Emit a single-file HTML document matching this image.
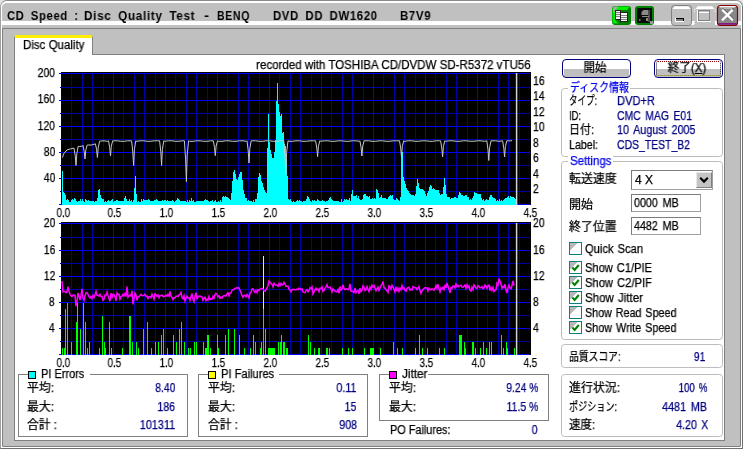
<!DOCTYPE html>
<html lang="ja"><head><meta charset="utf-8"><title>CD Speed : Disc Quality Test</title>
<style>
html,body{margin:0;padding:0}
body{width:743px;height:449px;overflow:hidden;position:relative;background:#e4e4e4;font-family:"Liberation Sans","Noto Sans CJK JP",sans-serif;font-size:12px;line-height:14px}
.abs{position:absolute}
.t{position:absolute;white-space:pre;line-height:14px;height:14px;will-change:transform;-webkit-text-stroke:0.25px}
.gb{position:absolute;border:1px solid #bcbcbc;border-radius:3.5px;box-sizing:border-box}
.gbs{position:absolute;border:1px solid #808080;box-sizing:border-box}
.wh{position:absolute;background:#fff}
.btn{position:absolute;box-sizing:border-box;border:1px solid #00007a;border-radius:4px;background:linear-gradient(#c0c0c0,#c0c0c0) no-repeat 1px 9px/65px 8px,#fff}
.inp{position:absolute;box-sizing:border-box;border:1px solid #7b7b7b;border-right-color:#a0a0a0;border-bottom-color:#a0a0a0;background:#fff}
.cb{position:absolute;box-sizing:border-box;width:13px;height:13px;border:1px solid #0a8080;background:linear-gradient(135deg,#b8b8b8 0,#b8b8b8 32%,#fff 32%,#fff 100%)}
.sq{position:absolute;box-sizing:border-box;width:8px;height:8px;border:1px solid #000}
</style></head>
<body>
<div class="abs" style="left:0;top:0;width:743px;height:449px;box-sizing:border-box;background:#c0c0c0;border:1px solid #8a8a8a;border-right-color:#707070;border-bottom-color:#707070;border-left-color:#a0a0a0;border-radius:7px 7px 0 0"></div>
<div class="abs" style="left:1px;top:1px;width:741px;height:447px;box-sizing:border-box;border:1px solid #fff;border-top-width:2px;border-radius:6px 6px 0 0"></div>
<div class="wh" style="left:2px;top:21px;width:739px;height:4px"></div>
<div class="abs" style="left:2px;top:28px;width:739px;height:419px;box-sizing:border-box;border:1px solid #808080;border-radius:0 0 2px 2px"></div>
<div class="wh" style="left:14px;top:54px;width:711px;height:387px;border:1px solid #808080;box-sizing:border-box"></div>
<div class="wh" style="left:14px;top:35px;width:79px;height:20px;border-top:3px solid #ffee00;border-right:1px solid #808080;border-left:1px solid #808080;box-sizing:border-box;border-radius:2px 2px 0 0"></div>
<svg class="abs" style="left:600px;top:0" width="143" height="30" viewBox="0 0 143 30"><rect x="12" y="6" width="19" height="19" rx="3" fill="#008000"/><path d="M14,6.5h16l-3,3.5h-8l-4,5v5l3.5,3.5h-5l-1,-1.5v-14z" fill="#00f000"/><path d="M13,7.5l1.5,-1h4l-5.5,7z" fill="#a8a8a8"/><rect x="15.5" y="10.5" width="5" height="9" fill="#f4f4f4" stroke="#202020" stroke-width="1"/><path d="M16,12.5h4M16,14.5h4M16,16.5h4" stroke="#808080" stroke-width="1" shape-rendering="crispEdges"/><rect x="20.5" y="12.5" width="7" height="9" fill="#fafafa" stroke="#202020" stroke-width="1"/><path d="M21,15.5h6M21,17.5h6M21,19.5h6" stroke="#808080" stroke-width="1" shape-rendering="crispEdges"/><rect x="35" y="6" width="19" height="19" rx="3" fill="#008000"/><rect x="37" y="8" width="15" height="15" fill="#0a0a0a"/><path d="M41.5,15v-3l2,-2h4.5v5z" fill="#8a8a8a"/><path d="M49,10v12" stroke="#8a8a8a" stroke-width="1"/><path d="M42,16.5h7" stroke="#8a8a8a" stroke-width="1"/><rect x="46" y="18" width="2" height="3" fill="#8a8a8a"/><rect x="39" y="19" width="1.5" height="2" fill="#707070"/><rect x="50" y="21" width="3" height="3" fill="#9a9a9a"/><rect x="71.5" y="5.5" width="20" height="20" rx="3" fill="#c0c0c0" stroke="#808080" stroke-width="1"/><path d="M72.6,9L74.6,6.2H88.4L90.4,9z" fill="#fff"/><rect x="76" y="18" width="8" height="3" fill="#808080"/><path d="M76,18.5H84M83.5,18V21" stroke="#000" stroke-width="1" fill="none"/><path d="M75.5,18V22M75,21.5H84" stroke="#fff" stroke-width="1" fill="none"/><rect x="94" y="9" width="21" height="16" fill="#c0c0c0"/><path d="M95.4,9L97.6,6.2H112.2L114.4,9z" fill="#fff"/><path d="M94.5,9v3M115.2,9v3M94.5,21v4M115.2,21v4" stroke="#fff" stroke-width="1" stroke-dasharray="1 1" fill="none"/><path d="M97.5,10V22M97,21.5H111" stroke="#fff" stroke-width="1" fill="none"/><rect x="98.5" y="10.5" width="11" height="10" fill="none" stroke="#808080" stroke-width="1"/><path d="M99,12.5H109" stroke="#fff" stroke-width="1" fill="none"/><rect x="117.5" y="5.5" width="20" height="20" rx="3" fill="#878787" stroke="#8c0000" stroke-width="1.2"/><path d="M119,6.6H136L133,9H122z" fill="#b4b4b4"/><path d="M119.5,6.6H135.5" stroke="#fff" stroke-width="1"/><path d="M118.6,23.9h17.8" stroke="#800080" stroke-width="1.4"/><path d="M122.6,8.6l11,11M133.4,8.6l-11,11" stroke="#000" stroke-width="1.2"/><path d="M122.2,9.6l10.8,10.8M132.8,9.6l-10.8,10.8" stroke="#fff" stroke-width="2.3"/></svg>
<div class="btn" style="left:562px;top:59px;width:69px;height:19px"></div>
<div class="btn" style="left:654px;top:59px;width:69px;height:19px"><div style="position:absolute;left:1px;top:1px;right:1px;bottom:1px;border:1px dotted #202020;border-top-color:#900000;border-bottom-color:#808000;border-radius:2px"></div></div>
<div class="gb" style="left:561px;top:88px;width:162px;height:69px"></div>
<div class="wh" style="left:568px;top:83px;width:62px;height:10px"></div>
<div class="gb" style="left:561px;top:161px;width:162px;height:179px"></div>
<div class="wh" style="left:568px;top:155px;width:45px;height:12px"></div>
<div class="gb" style="left:561px;top:344px;width:162px;height:24px"></div>
<div class="gb" style="left:561px;top:374px;width:162px;height:63px"></div>
<div class="inp" style="left:631px;top:170px;width:82px;height:20px"></div>
<div class="abs" style="left:696px;top:172px;width:16px;height:16px;background:#c4c4c4;box-sizing:border-box;border:1px solid #e8e8e8;border-right-color:#808080;border-bottom-color:#808080"><svg width="14" height="14" viewBox="0 0 14 14" style="position:absolute;left:0;top:0"><path d="M3.2,4.8L7,8.6L10.8,4.8" stroke="#000" stroke-width="2.2" fill="none"/></svg></div>
<div class="inp" style="left:631px;top:194px;width:70px;height:18px"></div>
<div class="inp" style="left:631px;top:217px;width:70px;height:18px"></div>
<div class="cb" style="left:569px;top:242px"></div>
<div class="cb" style="left:569px;top:261px"><svg width="11" height="11" viewBox="0 0 11 11" style="position:absolute;left:0;top:0"><path d="M2.3,5.4L4.6,7.9L8.8,3" stroke="#008000" stroke-width="2.1" fill="none"/></svg></div>
<div class="cb" style="left:569px;top:276px"><svg width="11" height="11" viewBox="0 0 11 11" style="position:absolute;left:0;top:0"><path d="M2.3,5.4L4.6,7.9L8.8,3" stroke="#008000" stroke-width="2.1" fill="none"/></svg></div>
<div class="cb" style="left:569px;top:291px"><svg width="11" height="11" viewBox="0 0 11 11" style="position:absolute;left:0;top:0"><path d="M2.3,5.4L4.6,7.9L8.8,3" stroke="#008000" stroke-width="2.1" fill="none"/></svg></div>
<div class="cb" style="left:569px;top:306px"></div>
<div class="cb" style="left:569px;top:321px"><svg width="11" height="11" viewBox="0 0 11 11" style="position:absolute;left:0;top:0"><path d="M2.3,5.4L4.6,7.9L8.8,3" stroke="#008000" stroke-width="2.1" fill="none"/></svg></div>
<div class="gbs" style="left:18px;top:374px;width:170px;height:63px"></div>
<div class="wh" style="left:28px;top:370px;width:62px;height:10px"></div>
<div class="gbs" style="left:198px;top:374px;width:170px;height:63px"></div>
<div class="wh" style="left:208px;top:370px;width:71px;height:10px"></div>
<div class="gbs" style="left:379px;top:374px;width:170px;height:47px"></div>
<div class="wh" style="left:389px;top:370px;width:39px;height:10px"></div>
<div class="sq" style="left:28px;top:371px;background:#00ffff"></div>
<div class="sq" style="left:208px;top:371px;background:#ffff00"></div>
<div class="sq" style="left:389px;top:371px;background:#ff00ff"></div>
<svg class="abs" style="left:0;top:0" width="743" height="449" viewBox="0 0 743 449" shape-rendering="crispEdges">
<rect x="61" y="72" width="470" height="133" fill="#000"/>
<path d="M71.5,73V204M82.5,73V204M92.5,73V204M103.5,73V204M123.5,73V204M134.5,73V204M144.5,73V204M155.5,73V204M175.5,73V204M186.5,73V204M196.5,73V204M207.5,73V204M227.5,73V204M238.5,73V204M248.5,73V204M259.5,73V204M279.5,73V204M290.5,73V204M300.5,73V204M311.5,73V204M331.5,73V204M342.5,73V204M352.5,73V204M363.5,73V204M383.5,73V204M394.5,73V204M404.5,73V204M415.5,73V204M435.5,73V204M446.5,73V204M456.5,73V204M467.5,73V204M487.5,73V204M498.5,73V204M508.5,73V204M519.5,73V204M60,87.5H530M60,113.5H530M60,139.5H530M60,165.5H530M60,191.5H530" stroke="#0000a8" stroke-width="1" fill="none"/>
<path d="M113.5,73V204M165.5,73V204M217.5,73V204M269.5,73V204M321.5,73V204M373.5,73V204M425.5,73V204M477.5,73V204M59,73.5H530M59,100.5H530M59,126.5H530M59,152.5H530M59,178.5H530M59,204.5H530" stroke="#0000ff" stroke-width="1" fill="none"/>
<rect x="61" y="222" width="470" height="133" fill="#000"/>
<path d="M71.5,223V354M82.5,223V354M92.5,223V354M103.5,223V354M123.5,223V354M134.5,223V354M144.5,223V354M155.5,223V354M175.5,223V354M186.5,223V354M196.5,223V354M207.5,223V354M227.5,223V354M238.5,223V354M248.5,223V354M259.5,223V354M279.5,223V354M290.5,223V354M300.5,223V354M311.5,223V354M331.5,223V354M342.5,223V354M352.5,223V354M363.5,223V354M383.5,223V354M394.5,223V354M404.5,223V354M415.5,223V354M435.5,223V354M446.5,223V354M456.5,223V354M467.5,223V354M487.5,223V354M498.5,223V354M508.5,223V354M519.5,223V354M60,237.5H530M60,263.5H530M60,289.5H530M60,315.5H530M60,341.5H530" stroke="#0000a8" stroke-width="1" fill="none"/>
<path d="M113.5,223V354M165.5,223V354M217.5,223V354M269.5,223V354M321.5,223V354M373.5,223V354M425.5,223V354M477.5,223V354M59,223.5H530M59,250.5H530M59,276.5H530M59,302.5H530M59,328.5H530M59,354.5H530" stroke="#0000ff" stroke-width="1" fill="none"/>
<path d="M62,204.5V171h1V192h1V193h1V195h1V200h1V199h1V200h1V202h1V202h1V200h1V199h1V200h1V198h1V199h1V201h1V202h1V201h1V201h1V199h1V201h1V199h1V201h1V202h1V199h1V200h1V201h1V200h1V201h1V201h1V201h1V201h1V201h1V202h1V201h1V201h1V198h1V190h1V189h1V195h1V198h1V199h1V199h1V202h1V201h1V202h1V201h1V200h1V201h1V201h1V200h1V199h1V202h1V201h1V201h1V200h1V200h1V201h1V201h1V201h1V201h1V201h1V201h1V198h1V196h1V199h1V201h1V201h1V199h1V201h1V200h1V202h1V200h1V188h1V176h1V194h1V202h1V201h1V202h1V202h1V199h1V201h1V199h1V200h1V200h1V200h1V200h1V199h1V200h1V201h1V201h1V201h1V201h1V200h1V200h1V199h1V200h1V201h1V201h1V201h1V201h1V200h1V201h1V200h1V200h1V201h1V200h1V201h1V201h1V201h1V201h1V200h1V201h1V202h1V201h1V200h1V198h1V199h1V200h1V201h1V201h1V201h1V201h1V201h1V201h1V202h1V200h1V202h1V200h1V201h1V198h1V201h1V200h1V202h1V202h1V201h1V201h1V201h1V201h1V201h1V201h1V201h1V201h1V200h1V199h1V200h1V200h1V201h1V202h1V201h1V201h1V200h1V202h1V201h1V200h1V202h1V202h1V201h1V202h1V200h1V202h1V197h1V196h1V197h1V196h1V197h1V197h1V198h1V199h1V200h1V193h1V181h1V172h1V170h1V174h1V179h1V180h1V177h1V174h1V172h1V172h1V180h1V190h1V194h1V198h1V198h1V201h1V200h1V201h1V201h1V201h1V202h1V200h1V202h1V199h1V199h1V193h1V177h1V173h1V175h1V181h1V183h1V187h1V190h1V192h1V193h1V148h1V114h1V142h1V150h1V154h1V158h1V158h1V152h1V140h1V101h1V83h1V104h1V112h1V116h1V114h1V133h1V132h1V144h1V146h1V159h1V176h1V199h1V200h1V199h1V201h1V202h1V201h1V202h1V202h1V201h1V200h1V201h1V200h1V201h1V201h1V202h1V201h1V201h1V201h1V199h1V196h1V197h1V199h1V201h1V202h1V200h1V201h1V200h1V201h1V201h1V199h1V200h1V201h1V201h1V201h1V200h1V201h1V201h1V202h1V201h1V201h1V200h1V198h1V197h1V199h1V200h1V201h1V201h1V201h1V201h1V201h1V201h1V202h1V202h1V199h1V202h1V201h1V199h1V200h1V199h1V200h1V200h1V198h1V201h1V194h1V190h1V196h1V196h1V196h1V195h1V198h1V196h1V199h1V200h1V200h1V199h1V195h1V194h1V194h1V196h1V196h1V197h1V196h1V199h1V199h1V198h1V199h1V198h1V199h1V189h1V190h1V193h1V198h1V197h1V195h1V198h1V198h1V198h1V198h1V199h1V199h1V197h1V196h1V195h1V196h1V195h1V199h1V200h1V200h1V198h1V199h1V200h1V201h1V197h1V152h1V152h1V177h1V181h1V184h1V188h1V190h1V191h1V193h1V194h1V195h1V195h1V195h1V196h1V194h1V186h1V179h1V183h1V188h1V189h1V189h1V189h1V190h1V191h1V194h1V196h1V193h1V191h1V187h1V185h1V186h1V189h1V188h1V189h1V190h1V190h1V190h1V190h1V193h1V195h1V194h1V194h1V187h1V178h1V185h1V194h1V197h1V197h1V197h1V199h1V198h1V198h1V198h1V197h1V197h1V198h1V198h1V195h1V192h1V193h1V195h1V195h1V196h1V196h1V195h1V195h1V197h1V197h1V200h1V199h1V200h1V198h1V196h1V192h1V193h1V193h1V194h1V194h1V194h1V194h1V198h1V200h1V199h1V201h1V200h1V199h1V200h1V200h1V197h1V195h1V195h1V197h1V198h1V198h1V199h1V201h1V200h1V201h1V199h1V201h1V200h1V201h1V200h1V199h1V198h1V198h1V197h1V196h1V198h1V196h1V197h1V197h1V197h1V198h1V199h1V203h1V204.5Z" fill="#00ffff" stroke="none"/>
<path d="M62.5,157.6L63.5,154.0L67.0,149.9L70.5,148.9L74.0,148.1L75.2,155.5L76.0,165.5L76.8,153.6L78.2,146.3L79.2,146.5L82.7,146.0L83.0,145.5L84.2,151.5L85.0,159.0L85.8,150.1L87.2,145.1L88.2,145.0L91.7,145.0L95.4,143.8L96.6,149.3L97.4,157.5L98.2,147.8L99.6,141.2L100.6,141.0L104.1,140.9L107.6,141.3L108.5,140.8L109.7,147.6L110.5,156.0L111.3,146.1L112.7,140.8L113.7,140.8L117.2,140.8L120.7,141.3L124.2,141.3L127.7,140.8L131.2,140.8L131.6,140.8L132.8,151.9L133.6,165.5L134.4,149.4L135.8,140.8L136.8,141.3L140.3,140.8L143.8,140.8L147.3,141.3L150.8,141.3L154.3,140.8L157.8,140.8L159.6,140.8L160.8,151.9L161.6,165.5L162.4,149.4L163.8,140.8L164.8,141.3L168.3,140.8L171.8,140.8L175.3,141.3L178.8,141.3L182.3,140.8L184.4,140.8L185.6,159.2L186.4,181.7L187.2,155.1L188.6,140.8L189.6,141.3L193.1,141.3L196.6,140.8L200.1,140.8L203.6,141.3L207.1,141.3L210.6,140.8L213.3,140.8L214.5,147.5L215.3,155.7L216.1,146.0L217.5,140.8L218.5,141.3L222.0,141.3L225.5,140.8L229.0,140.8L232.5,141.3L236.0,141.3L239.5,140.8L243.0,140.8L246.5,141.3L247.0,140.8L248.2,150.8L249.0,163.0L249.8,148.6L251.2,140.8L252.2,140.8L255.7,140.8L259.2,141.3L262.7,141.3L266.2,140.8L269.7,140.8L273.2,141.3L276.7,141.3L280.2,140.8L283.8,140.8L285.0,156.0L285.8,174.5L286.6,152.6L288.0,140.8L289.0,141.3L292.5,141.3L296.0,140.8L299.5,140.8L303.0,141.3L306.5,141.3L310.0,140.8L313.5,140.8L315.6,140.8L316.8,148.0L317.6,156.7L318.4,146.4L319.8,140.8L320.8,141.3L324.3,140.8L327.8,140.8L331.3,141.3L334.8,141.3L338.3,140.8L341.8,140.8L345.3,141.3L348.8,141.3L352.3,140.8L355.8,140.8L359.3,141.3L359.9,140.8L361.1,147.6L361.9,156.0L362.7,146.1L364.1,140.8L365.1,140.8L368.6,140.8L372.1,141.3L375.6,141.3L379.1,140.8L382.6,140.8L386.1,141.3L389.6,141.3L393.1,140.8L396.6,140.8L399.5,140.8L400.7,148.1L401.5,157.0L402.3,146.5L403.7,140.8L404.7,141.3L408.2,140.8L411.7,140.8L415.2,141.3L418.7,141.3L422.2,140.8L425.7,140.8L429.2,141.3L432.7,141.3L436.2,140.8L439.7,140.8L440.6,140.8L441.8,148.1L442.6,157.0L443.4,146.5L444.8,140.8L445.8,141.3L449.3,140.8L452.8,140.8L456.3,141.3L459.8,141.3L463.3,140.8L466.8,140.8L470.3,141.3L473.8,141.3L477.3,140.8L480.8,140.8L484.3,141.3L486.8,140.8L488.0,149.7L488.8,160.5L489.6,147.7L491.0,140.8L492.0,140.8L495.5,140.8L499.0,141.3L502.6,140.8L503.8,148.1L504.6,157.0L505.4,146.5L506.8,140.8L507.8,140.8L510.8,140.8L512.0,140.6" fill="none" stroke="#c8c8c8" stroke-width="1" shape-rendering="auto"/>
<path d="M62.5,354.5V348.0M64.5,354.5V348.0M65.5,354.5V309.0M67.5,354.5V302.5M71.5,354.5V341.5M76.5,354.5V322.0M77.5,354.5V302.5M80.5,354.5V328.5M83.5,354.5V302.5M85.5,354.5V322.0M87.5,354.5V348.0M89.5,354.5V341.5M99.5,354.5V348.0M102.5,354.5V315.5M104.5,354.5V341.5M105.5,354.5V348.0M109.5,354.5V322.0M111.5,354.5V348.0M122.5,354.5V348.0M129.5,354.5V315.5M130.5,354.5V315.5M132.5,354.5V341.5M136.5,354.5V341.5M138.5,354.5V348.0M143.5,354.5V328.5M147.5,354.5V322.0M151.5,354.5V348.0M155.5,354.5V341.5M158.5,354.5V341.5M161.5,354.5V335.0M163.5,354.5V328.5M167.5,354.5V348.0M173.5,354.5V335.0M176.5,354.5V341.5M179.5,354.5V328.5M181.5,354.5V322.0M184.5,354.5V341.5M188.5,354.5V348.0M190.5,354.5V348.0M194.5,354.5V341.5M196.5,354.5V341.5M203.5,354.5V341.5M205.5,354.5V348.0M207.5,354.5V335.0M210.5,354.5V348.0M206.5,354.5V348.0M208.5,354.5V335.0M217.5,354.5V335.0M218.5,354.5V348.0M225.5,354.5V335.0M228.5,354.5V328.5M234.5,354.5V328.5M239.5,354.5V335.0M244.5,354.5V348.0M250.5,354.5V348.0M253.5,354.5V335.0M255.5,354.5V341.5M260.5,354.5V348.0M261.5,354.5V341.5M265.5,354.5V328.5M268.5,354.5V348.0M269.5,354.5V348.0M270.5,354.5V348.0M271.5,354.5V348.0M272.5,354.5V348.0M273.5,354.5V348.0M274.5,354.5V348.0M278.5,354.5V341.5M280.5,354.5V341.5M281.5,354.5V341.5M281.5,354.5V335.0M283.5,354.5V341.5M284.5,354.5V341.5M286.5,354.5V348.0M287.5,354.5V348.0M308.5,354.5V335.0M310.5,354.5V341.5M314.5,354.5V348.0M318.5,354.5V348.0M319.5,354.5V348.0M326.5,354.5V348.0M327.5,354.5V348.0M329.5,354.5V348.0M342.5,354.5V348.0M348.5,354.5V348.0M352.5,354.5V348.0M364.5,354.5V348.0M370.5,354.5V348.0M371.5,354.5V348.0M372.5,354.5V348.0M373.5,354.5V348.0M380.5,354.5V348.0M393.5,354.5V341.5M397.5,354.5V348.0M402.5,354.5V348.0M415.5,354.5V348.0M419.5,354.5V335.0M422.5,354.5V348.0M427.5,354.5V348.0M439.5,354.5V348.0M444.5,354.5V348.0M459.5,354.5V335.0M460.5,354.5V335.0M461.5,354.5V335.0M464.5,354.5V341.5M465.5,354.5V348.0M472.5,354.5V341.5M473.5,354.5V341.5M475.5,354.5V348.0M480.5,354.5V348.0M483.5,354.5V341.5M486.5,354.5V348.0M489.5,354.5V341.5M491.5,354.5V341.5M501.5,354.5V335.0M503.5,354.5V348.0M506.5,354.5V341.5M507.5,354.5V348.0M514.5,354.5V348.0" stroke="#00ff00" stroke-width="1" fill="none"/>
<path d="M263.5,354.5V309.0" stroke="#00ff00" stroke-width="1"/>
<path d="M263.5,309.0V256.0" stroke="#ffff00" stroke-width="1"/>
<path d="M62.0,281.0L63.0,291.9L64.0,291.2L65.0,291.5L66.0,292.8L67.0,292.0L68.0,286.7L69.0,291.4L70.0,294.3L71.0,295.9L72.0,296.5L73.0,295.2L74.0,295.0L75.0,295.3L76.0,306.2L77.0,301.6L78.0,293.0L79.0,296.2L80.0,300.0L81.0,295.7L82.0,288.8L83.0,297.7L84.0,300.3L85.0,295.9L86.0,292.6L87.0,292.5L88.0,294.4L89.0,296.6L90.0,297.9L91.0,296.4L92.0,298.5L93.0,295.4L94.0,297.4L95.0,294.7L96.0,291.5L97.0,295.3L98.0,295.2L99.0,296.0L100.0,294.3L101.0,296.6L102.0,296.5L103.0,300.2L104.0,299.1L105.0,295.1L106.0,295.4L107.0,292.1L108.0,295.4L109.0,298.4L110.0,301.2L111.0,293.2L112.0,298.2L113.0,294.3L114.0,294.7L115.0,296.7L116.0,300.9L117.0,293.0L118.0,294.4L119.0,294.2L120.0,299.1L121.0,296.6L122.0,296.2L123.0,294.3L124.0,295.9L125.0,293.7L126.0,296.6L127.0,286.5L128.0,297.2L129.0,295.9L130.0,294.9L131.0,295.9L132.0,290.8L133.0,304.4L134.0,298.5L135.0,293.0L136.0,295.0L137.0,300.4L138.0,296.8L139.0,296.7L140.0,295.4L141.0,294.4L142.0,295.7L143.0,295.5L144.0,295.1L145.0,294.3L146.0,296.5L147.0,296.0L148.0,298.5L149.0,296.7L150.0,296.5L151.0,297.7L152.0,294.2L153.0,296.3L154.0,299.2L155.0,293.9L156.0,294.8L157.0,296.2L158.0,295.0L159.0,297.6L160.0,295.6L161.0,295.5L162.0,295.1L163.0,296.3L164.0,296.9L165.0,295.8L166.0,295.0L167.0,296.2L168.0,294.5L169.0,296.1L170.0,291.4L171.0,296.1L172.0,297.4L173.0,299.6L174.0,297.8L175.0,297.7L176.0,296.3L177.0,296.0L178.0,296.5L179.0,294.9L180.0,294.4L181.0,292.5L182.0,297.6L183.0,298.8L184.0,295.8L185.0,301.0L186.0,298.2L187.0,296.1L188.0,297.9L189.0,297.7L190.0,300.3L191.0,296.7L192.0,293.4L193.0,299.2L194.0,301.7L195.0,296.4L196.0,292.6L197.0,299.3L198.0,296.2L199.0,296.6L200.0,295.9L201.0,296.8L202.0,297.0L203.0,300.3L204.0,298.5L205.0,297.3L206.0,300.7L207.0,299.1L208.0,300.1L209.0,296.4L210.0,299.5L211.0,298.9L212.0,299.1L213.0,296.3L214.0,298.1L215.0,294.6L216.0,293.3L217.0,294.3L218.0,296.8L219.0,295.8L220.0,298.4L221.0,297.2L222.0,298.1L223.0,296.1L224.0,295.7L225.0,295.6L226.0,296.0L227.0,293.8L228.0,292.9L229.0,295.8L230.0,292.9L231.0,292.8L232.0,290.5L233.0,289.7L234.0,289.3L235.0,288.4L236.0,288.1L237.0,287.5L238.0,288.4L239.0,287.9L240.0,290.2L241.0,292.8L242.0,295.4L243.0,297.2L244.0,295.5L245.0,295.4L246.0,296.7L247.0,294.5L248.0,296.0L249.0,297.9L250.0,293.2L251.0,292.4L252.0,289.0L253.0,288.8L254.0,290.8L255.0,292.5L256.0,290.3L257.0,292.7L258.0,289.7L259.0,290.4L260.0,289.1L261.0,288.8L262.0,288.4L263.0,289.0L264.0,290.9L265.0,291.3L266.0,289.5L267.0,287.8L268.0,285.7L269.0,281.1L270.0,282.1L271.0,283.2L272.0,284.1L273.0,286.8L274.0,283.2L275.0,284.7L276.0,285.2L277.0,285.3L278.0,286.2L279.0,283.5L280.0,285.7L281.0,283.3L282.0,285.0L283.0,284.8L284.0,282.3L285.0,283.8L286.0,286.4L287.0,286.2L288.0,286.3L289.0,289.3L290.0,290.1L291.0,291.8L292.0,289.7L293.0,289.3L294.0,289.4L295.0,289.7L296.0,289.8L297.0,289.1L298.0,289.5L299.0,288.2L300.0,288.7L301.0,289.5L302.0,288.9L303.0,291.9L304.0,292.4L305.0,292.7L306.0,290.6L307.0,289.6L308.0,291.7L309.0,290.4L310.0,287.6L311.0,288.7L312.0,287.0L313.0,293.9L314.0,291.9L315.0,289.6L316.0,288.1L317.0,289.9L318.0,289.2L319.0,291.7L320.0,288.1L321.0,288.4L322.0,286.9L323.0,291.5L324.0,290.6L325.0,288.3L326.0,286.8L327.0,284.6L328.0,287.7L329.0,287.6L330.0,287.0L331.0,289.0L332.0,291.9L333.0,288.8L334.0,290.1L335.0,291.0L336.0,291.5L337.0,291.9L338.0,289.5L339.0,293.3L340.0,286.5L341.0,290.1L342.0,289.2L343.0,284.8L344.0,288.5L345.0,289.7L346.0,289.0L347.0,288.8L348.0,289.8L349.0,288.8L350.0,283.9L351.0,291.2L352.0,291.2L353.0,291.4L354.0,292.4L355.0,288.0L356.0,292.7L357.0,291.2L358.0,290.5L359.0,293.8L360.0,288.1L361.0,291.7L362.0,290.0L363.0,285.9L364.0,287.4L365.0,290.6L366.0,289.5L367.0,286.6L368.0,289.6L369.0,291.6L370.0,287.2L371.0,289.5L372.0,285.2L373.0,287.0L374.0,285.4L375.0,288.4L376.0,290.7L377.0,288.7L378.0,287.0L379.0,290.4L380.0,287.8L381.0,285.7L382.0,284.5L383.0,281.4L384.0,287.8L385.0,288.2L386.0,289.7L387.0,290.8L388.0,292.4L389.0,285.7L390.0,286.4L391.0,289.1L392.0,285.4L393.0,287.1L394.0,289.2L395.0,292.0L396.0,286.8L397.0,291.6L398.0,288.3L399.0,291.3L400.0,288.2L401.0,289.9L402.0,285.6L403.0,288.8L404.0,288.0L405.0,290.3L406.0,291.2L407.0,288.3L408.0,287.6L409.0,287.2L410.0,290.1L411.0,289.2L412.0,290.0L413.0,286.4L414.0,287.1L415.0,287.8L416.0,287.8L417.0,289.5L418.0,288.0L419.0,286.6L420.0,290.6L421.0,293.5L422.0,291.2L423.0,289.4L424.0,288.3L425.0,287.8L426.0,287.8L427.0,287.9L428.0,291.0L429.0,288.1L430.0,289.0L431.0,289.9L432.0,288.6L433.0,289.7L434.0,290.2L435.0,288.5L436.0,285.6L437.0,288.5L438.0,284.2L439.0,288.8L440.0,291.8L441.0,288.0L442.0,289.0L443.0,287.4L444.0,289.6L445.0,284.7L446.0,287.9L447.0,282.9L448.0,286.6L449.0,289.3L450.0,292.8L451.0,287.8L452.0,288.4L453.0,286.1L454.0,286.1L455.0,287.8L456.0,284.1L457.0,286.5L458.0,285.4L459.0,286.7L460.0,285.8L461.0,285.2L462.0,287.1L463.0,287.3L464.0,286.2L465.0,285.0L466.0,288.4L467.0,284.9L468.0,287.6L469.0,285.9L470.0,290.1L471.0,291.0L472.0,287.2L473.0,289.6L474.0,284.9L475.0,286.3L476.0,288.2L477.0,288.5L478.0,285.6L479.0,286.5L480.0,287.8L481.0,287.4L482.0,286.7L483.0,288.6L484.0,288.0L485.0,285.1L486.0,285.9L487.0,288.4L488.0,285.5L489.0,285.0L490.0,290.5L491.0,287.5L492.0,290.3L493.0,287.4L494.0,291.5L495.0,290.4L496.0,289.5L497.0,283.2L498.0,285.0L499.0,278.5L500.0,281.4L501.0,283.9L502.0,288.4L503.0,286.4L504.0,287.4L505.0,284.2L506.0,290.1L507.0,293.1L508.0,287.6L509.0,285.0L510.0,288.0L511.0,288.7L512.0,285.6L513.0,280.8L514.0,285.6" fill="none" stroke="#ff00ff" stroke-width="1.5" shape-rendering="auto"/>
<path d="M516.6,73V205M516.6,223V355" stroke="#d4d4d4" stroke-width="1.5" shape-rendering="auto"/>
</svg>
<span class="t" style="top:9.0px;color:#000;font-weight:bold;word-spacing:2.8px;letter-spacing:0.7px;-webkit-text-stroke:0;left:6.7px;transform-origin:0 50%;transform:scaleX(0.935);">CD Speed :</span>
<span class="t" style="top:9.0px;color:#000;font-weight:bold;word-spacing:2.8px;letter-spacing:0.7px;-webkit-text-stroke:0;left:84.1px;transform-origin:0 50%;transform:scaleX(0.976);">Disc Quality Test</span>
<span class="t" style="top:9.0px;color:#000;font-weight:bold;letter-spacing:0.7px;-webkit-text-stroke:0;left:204.2px;transform-origin:0 50%;transform:scaleX(1.276);">-</span>
<span class="t" style="top:9.0px;color:#000;font-weight:bold;letter-spacing:0.7px;-webkit-text-stroke:0;left:217.0px;transform-origin:0 50%;transform:scaleX(0.880);">BENQ</span>
<span class="t" style="top:9.0px;color:#000;font-weight:bold;word-spacing:2.8px;letter-spacing:0.7px;-webkit-text-stroke:0;left:272.6px;transform-origin:0 50%;transform:scaleX(0.946);">DVD DD DW1620</span>
<span class="t" style="top:9.0px;color:#000;font-weight:bold;letter-spacing:0.7px;-webkit-text-stroke:0;left:399.8px;transform-origin:0 50%;transform:scaleX(0.950);">B7V9</span>
<span class="t" style="top:38.0px;color:#000;left:22.6px;transform-origin:0 50%;transform:scaleX(0.959);">Disc Quality</span>
<span class="t" style="top:58.0px;color:#000;left:245.04px;transform-origin:100% 50%;transform:scaleX(0.961);">recorded with TOSHIBA CD/DVDW SD-R5372 vTU56</span>
<span class="t" style="top:61.0px;color:#000;left:583.19px;transform-origin:50% 50%;transform:scaleX(0.958);">開始</span>
<span class="t" style="top:61.0px;color:#000;left:667.49px;transform-origin:50% 50%;transform:scaleX(0.962);">終了(<u>X</u>)</span>
<span class="t" style="top:81.0px;color:#0000e6;left:569.6px;transform-origin:0 50%;transform:scaleX(0.826);">ディスク情報</span>
<span class="t" style="top:94.0px;color:#000;left:569.0px;transform-origin:0 50%;transform:scaleX(0.712);">タイプ:</span>
<span class="t" style="top:94.0px;color:#000080;word-spacing:2px;left:617.0px;transform-origin:0 50%;transform:scaleX(0.926);">DVD+R</span>
<span class="t" style="top:109.0px;color:#000;left:569.0px;transform-origin:0 50%;transform:scaleX(0.782);">ID:</span>
<span class="t" style="top:109.0px;color:#000080;word-spacing:2px;left:617.0px;transform-origin:0 50%;transform:scaleX(0.865);">CMC MAG E01</span>
<span class="t" style="top:123.0px;color:#000;left:569.0px;transform-origin:0 50%;transform:scaleX(0.914);">日付:</span>
<span class="t" style="top:123.0px;color:#000080;word-spacing:2px;left:617.0px;transform-origin:0 50%;transform:scaleX(0.897);">10 August 2005</span>
<span class="t" style="top:138.0px;color:#000;left:569.0px;transform-origin:0 50%;transform:scaleX(0.887);">Label:</span>
<span class="t" style="top:138.0px;color:#000080;word-spacing:2px;left:617.0px;transform-origin:0 50%;transform:scaleX(0.869);">CDS_TEST_B2</span>
<span class="t" style="top:154.0px;color:#0000e6;left:569.6px;transform-origin:0 50%;transform:scaleX(0.957);">Settings</span>
<span class="t" style="top:172.0px;color:#000;left:569.0px;transform-origin:0 50%;transform:scaleX(0.991);">転送速度</span>
<span class="t" style="top:173.0px;color:#000;left:634.5px;transform-origin:0 50%;transform:scaleX(0.999);">4 X</span>
<span class="t" style="top:198.0px;color:#000;left:569.0px;transform-origin:0 50%;transform:scaleX(0.999);">開始</span>
<span class="t" style="top:196.0px;color:#000;word-spacing:2px;left:633.7px;transform-origin:0 50%;transform:scaleX(0.893);">0000 MB</span>
<span class="t" style="top:220.0px;color:#000;left:569.0px;transform-origin:0 50%;transform:scaleX(0.991);">終了位置</span>
<span class="t" style="top:219.0px;color:#000;word-spacing:2px;left:633.7px;transform-origin:0 50%;transform:scaleX(0.893);">4482 MB</span>
<span class="t" style="top:242.0px;color:#000;word-spacing:1px;left:584.5px;transform-origin:0 50%;transform:scaleX(0.930);">Quick Scan</span>
<span class="t" style="top:261.0px;color:#000;word-spacing:1px;left:584.5px;transform-origin:0 50%;transform:scaleX(0.926);">Show C1/PIE</span>
<span class="t" style="top:276.0px;color:#000;word-spacing:1px;left:584.5px;transform-origin:0 50%;transform:scaleX(0.934);">Show C2/PIF</span>
<span class="t" style="top:291.0px;color:#000;word-spacing:1px;left:584.5px;transform-origin:0 50%;transform:scaleX(0.961);">Show Jitter</span>
<span class="t" style="top:306.0px;color:#000;word-spacing:1px;left:584.5px;transform-origin:0 50%;transform:scaleX(0.896);">Show Read Speed</span>
<span class="t" style="top:321.0px;color:#000;word-spacing:1px;left:584.5px;transform-origin:0 50%;transform:scaleX(0.904);">Show Write Speed</span>
<span class="t" style="top:350.0px;color:#000;left:569.0px;transform-origin:0 50%;transform:scaleX(0.815);">品質スコア:</span>
<span class="t" style="top:350.0px;color:#000080;left:691.94px;transform-origin:100% 50%;transform:scaleX(0.861);">91</span>
<span class="t" style="top:381.0px;color:#000;left:569.0px;transform-origin:0 50%;transform:scaleX(0.993);">進行状況:</span>
<span class="t" style="top:381.0px;color:#000080;word-spacing:1.5px;left:671.97px;transform-origin:100% 50%;transform:scaleX(0.816);">100 %</span>
<span class="t" style="top:400.0px;color:#000;left:569.0px;transform-origin:0 50%;transform:scaleX(0.758);">ポジション:</span>
<span class="t" style="top:400.0px;color:#000080;word-spacing:2px;left:656.67px;transform-origin:100% 50%;transform:scaleX(0.899);">4481 MB</span>
<span class="t" style="top:418.0px;color:#000;left:569.0px;transform-origin:0 50%;transform:scaleX(0.951);">速度:</span>
<span class="t" style="top:418.0px;color:#000080;word-spacing:1.5px;left:671.80px;transform-origin:100% 50%;transform:scaleX(0.884);">4.20 X</span>
<span class="t" style="top:367.0px;color:#000;left:40.7px;transform-origin:0 50%;transform:scaleX(0.915);">PI Errors</span>
<span class="t" style="top:367.0px;color:#000;left:220.7px;transform-origin:0 50%;transform:scaleX(0.927);">PI Failures</span>
<span class="t" style="top:367.0px;color:#000;left:402.0px;transform-origin:0 50%;transform:scaleX(0.980);">Jitter</span>
<span class="t" style="top:381.0px;color:#000;left:26.6px;transform-origin:0 50%;transform:scaleX(0.987);">平均:</span>
<span class="t" style="top:381.0px;color:#000080;left:151.64px;transform-origin:100% 50%;transform:scaleX(0.860);">8.40</span>
<span class="t" style="top:400.0px;color:#000;left:26.6px;transform-origin:0 50%;transform:scaleX(0.987);">最大:</span>
<span class="t" style="top:400.0px;color:#000080;left:154.97px;transform-origin:100% 50%;transform:scaleX(0.884);">186</span>
<span class="t" style="top:418.0px;color:#000;left:26.6px;transform-origin:0 50%;transform:scaleX(0.978);">合計 :</span>
<span class="t" style="top:418.0px;color:#000080;left:135.84px;transform-origin:100% 50%;transform:scaleX(0.904);">101311</span>
<span class="t" style="top:381.0px;color:#000;left:208.4px;transform-origin:0 50%;transform:scaleX(0.987);">平均:</span>
<span class="t" style="top:381.0px;color:#000080;left:334.23px;transform-origin:100% 50%;transform:scaleX(0.895);">0.11</span>
<span class="t" style="top:400.0px;color:#000;left:208.4px;transform-origin:0 50%;transform:scaleX(0.987);">最大:</span>
<span class="t" style="top:400.0px;color:#000080;left:343.34px;transform-origin:100% 50%;transform:scaleX(0.883);">15</span>
<span class="t" style="top:418.0px;color:#000;left:208.4px;transform-origin:0 50%;transform:scaleX(0.978);">合計 :</span>
<span class="t" style="top:418.0px;color:#000080;left:336.67px;transform-origin:100% 50%;transform:scaleX(0.884);">908</span>
<span class="t" style="top:381.0px;color:#000;left:389.2px;transform-origin:0 50%;transform:scaleX(0.987);">平均:</span>
<span class="t" style="top:381.0px;color:#000080;left:501.44px;transform-origin:100% 50%;transform:scaleX(0.857);">9.24 %</span>
<span class="t" style="top:400.0px;color:#000;left:389.2px;transform-origin:0 50%;transform:scaleX(0.987);">最大:</span>
<span class="t" style="top:400.0px;color:#000080;left:502.33px;transform-origin:100% 50%;transform:scaleX(0.877);">11.5 %</span>
<span class="t" style="top:423.0px;color:#000;left:390.0px;transform-origin:0 50%;transform:scaleX(0.907);">PO Failures:</span>
<span class="t" style="top:423.0px;color:#000080;left:530.81px;transform-origin:100% 50%;transform:scaleX(0.897);">0</span>
<span class="t" style="top:206.0px;color:#000;left:55.16px;transform-origin:50% 50%;transform:scaleX(0.809);">0.0</span>
<span class="t" style="top:356.0px;color:#000;left:55.16px;transform-origin:50% 50%;transform:scaleX(0.809);">0.0</span>
<span class="t" style="top:206.0px;color:#000;left:106.46px;transform-origin:50% 50%;transform:scaleX(0.809);">0.5</span>
<span class="t" style="top:356.0px;color:#000;left:106.46px;transform-origin:50% 50%;transform:scaleX(0.809);">0.5</span>
<span class="t" style="top:206.0px;color:#000;left:158.46px;transform-origin:50% 50%;transform:scaleX(0.809);">1.0</span>
<span class="t" style="top:356.0px;color:#000;left:158.46px;transform-origin:50% 50%;transform:scaleX(0.809);">1.0</span>
<span class="t" style="top:206.0px;color:#000;left:210.46px;transform-origin:50% 50%;transform:scaleX(0.809);">1.5</span>
<span class="t" style="top:356.0px;color:#000;left:210.46px;transform-origin:50% 50%;transform:scaleX(0.809);">1.5</span>
<span class="t" style="top:206.0px;color:#000;left:262.46px;transform-origin:50% 50%;transform:scaleX(0.809);">2.0</span>
<span class="t" style="top:356.0px;color:#000;left:262.46px;transform-origin:50% 50%;transform:scaleX(0.809);">2.0</span>
<span class="t" style="top:206.0px;color:#000;left:314.46px;transform-origin:50% 50%;transform:scaleX(0.809);">2.5</span>
<span class="t" style="top:356.0px;color:#000;left:314.46px;transform-origin:50% 50%;transform:scaleX(0.809);">2.5</span>
<span class="t" style="top:206.0px;color:#000;left:366.46px;transform-origin:50% 50%;transform:scaleX(0.809);">3.0</span>
<span class="t" style="top:356.0px;color:#000;left:366.46px;transform-origin:50% 50%;transform:scaleX(0.809);">3.0</span>
<span class="t" style="top:206.0px;color:#000;left:418.46px;transform-origin:50% 50%;transform:scaleX(0.809);">3.5</span>
<span class="t" style="top:356.0px;color:#000;left:418.46px;transform-origin:50% 50%;transform:scaleX(0.809);">3.5</span>
<span class="t" style="top:206.0px;color:#000;left:470.46px;transform-origin:50% 50%;transform:scaleX(0.809);">4.0</span>
<span class="t" style="top:356.0px;color:#000;left:470.46px;transform-origin:50% 50%;transform:scaleX(0.809);">4.0</span>
<span class="t" style="top:206.0px;color:#000;left:522.46px;transform-origin:50% 50%;transform:scaleX(0.809);">4.5</span>
<span class="t" style="top:356.0px;color:#000;left:522.46px;transform-origin:50% 50%;transform:scaleX(0.809);">4.5</span>
<span class="t" style="top:66.0px;color:#000;left:34.97px;transform-origin:100% 50%;transform:scaleX(0.869);">200</span>
<span class="t" style="top:92.0px;color:#000;left:34.97px;transform-origin:100% 50%;transform:scaleX(0.869);">160</span>
<span class="t" style="top:119.0px;color:#000;left:34.97px;transform-origin:100% 50%;transform:scaleX(0.869);">120</span>
<span class="t" style="top:145.0px;color:#000;left:41.64px;transform-origin:100% 50%;transform:scaleX(0.868);">80</span>
<span class="t" style="top:171.0px;color:#000;left:41.64px;transform-origin:100% 50%;transform:scaleX(0.868);">40</span>
<span class="t" style="top:216.0px;color:#000;left:41.64px;transform-origin:100% 50%;transform:scaleX(0.868);">20</span>
<span class="t" style="top:216.0px;color:#000;left:533.3px;transform-origin:0 50%;transform:scaleX(0.868);">20</span>
<span class="t" style="top:243.0px;color:#000;left:41.64px;transform-origin:100% 50%;transform:scaleX(0.868);">16</span>
<span class="t" style="top:243.0px;color:#000;left:533.3px;transform-origin:0 50%;transform:scaleX(0.868);">16</span>
<span class="t" style="top:269.0px;color:#000;left:41.64px;transform-origin:100% 50%;transform:scaleX(0.868);">12</span>
<span class="t" style="top:269.0px;color:#000;left:533.3px;transform-origin:0 50%;transform:scaleX(0.868);">12</span>
<span class="t" style="top:295.0px;color:#000;left:48.31px;transform-origin:100% 50%;transform:scaleX(0.867);">8</span>
<span class="t" style="top:295.0px;color:#000;left:533.3px;transform-origin:0 50%;transform:scaleX(0.867);">8</span>
<span class="t" style="top:321.0px;color:#000;left:48.31px;transform-origin:100% 50%;transform:scaleX(0.867);">4</span>
<span class="t" style="top:321.0px;color:#000;left:533.3px;transform-origin:0 50%;transform:scaleX(0.867);">4</span>
<span class="t" style="top:182.0px;color:#000;left:533.3px;transform-origin:0 50%;transform:scaleX(0.867);">2</span>
<span class="t" style="top:167.0px;color:#000;left:533.3px;transform-origin:0 50%;transform:scaleX(0.867);">4</span>
<span class="t" style="top:151.0px;color:#000;left:533.3px;transform-origin:0 50%;transform:scaleX(0.867);">6</span>
<span class="t" style="top:136.0px;color:#000;left:533.3px;transform-origin:0 50%;transform:scaleX(0.867);">8</span>
<span class="t" style="top:120.0px;color:#000;left:533.3px;transform-origin:0 50%;transform:scaleX(0.868);">10</span>
<span class="t" style="top:105.0px;color:#000;left:533.3px;transform-origin:0 50%;transform:scaleX(0.868);">12</span>
<span class="t" style="top:89.0px;color:#000;left:533.3px;transform-origin:0 50%;transform:scaleX(0.868);">14</span>
<span class="t" style="top:74.0px;color:#000;left:533.3px;transform-origin:0 50%;transform:scaleX(0.868);">16</span>
</body></html>
